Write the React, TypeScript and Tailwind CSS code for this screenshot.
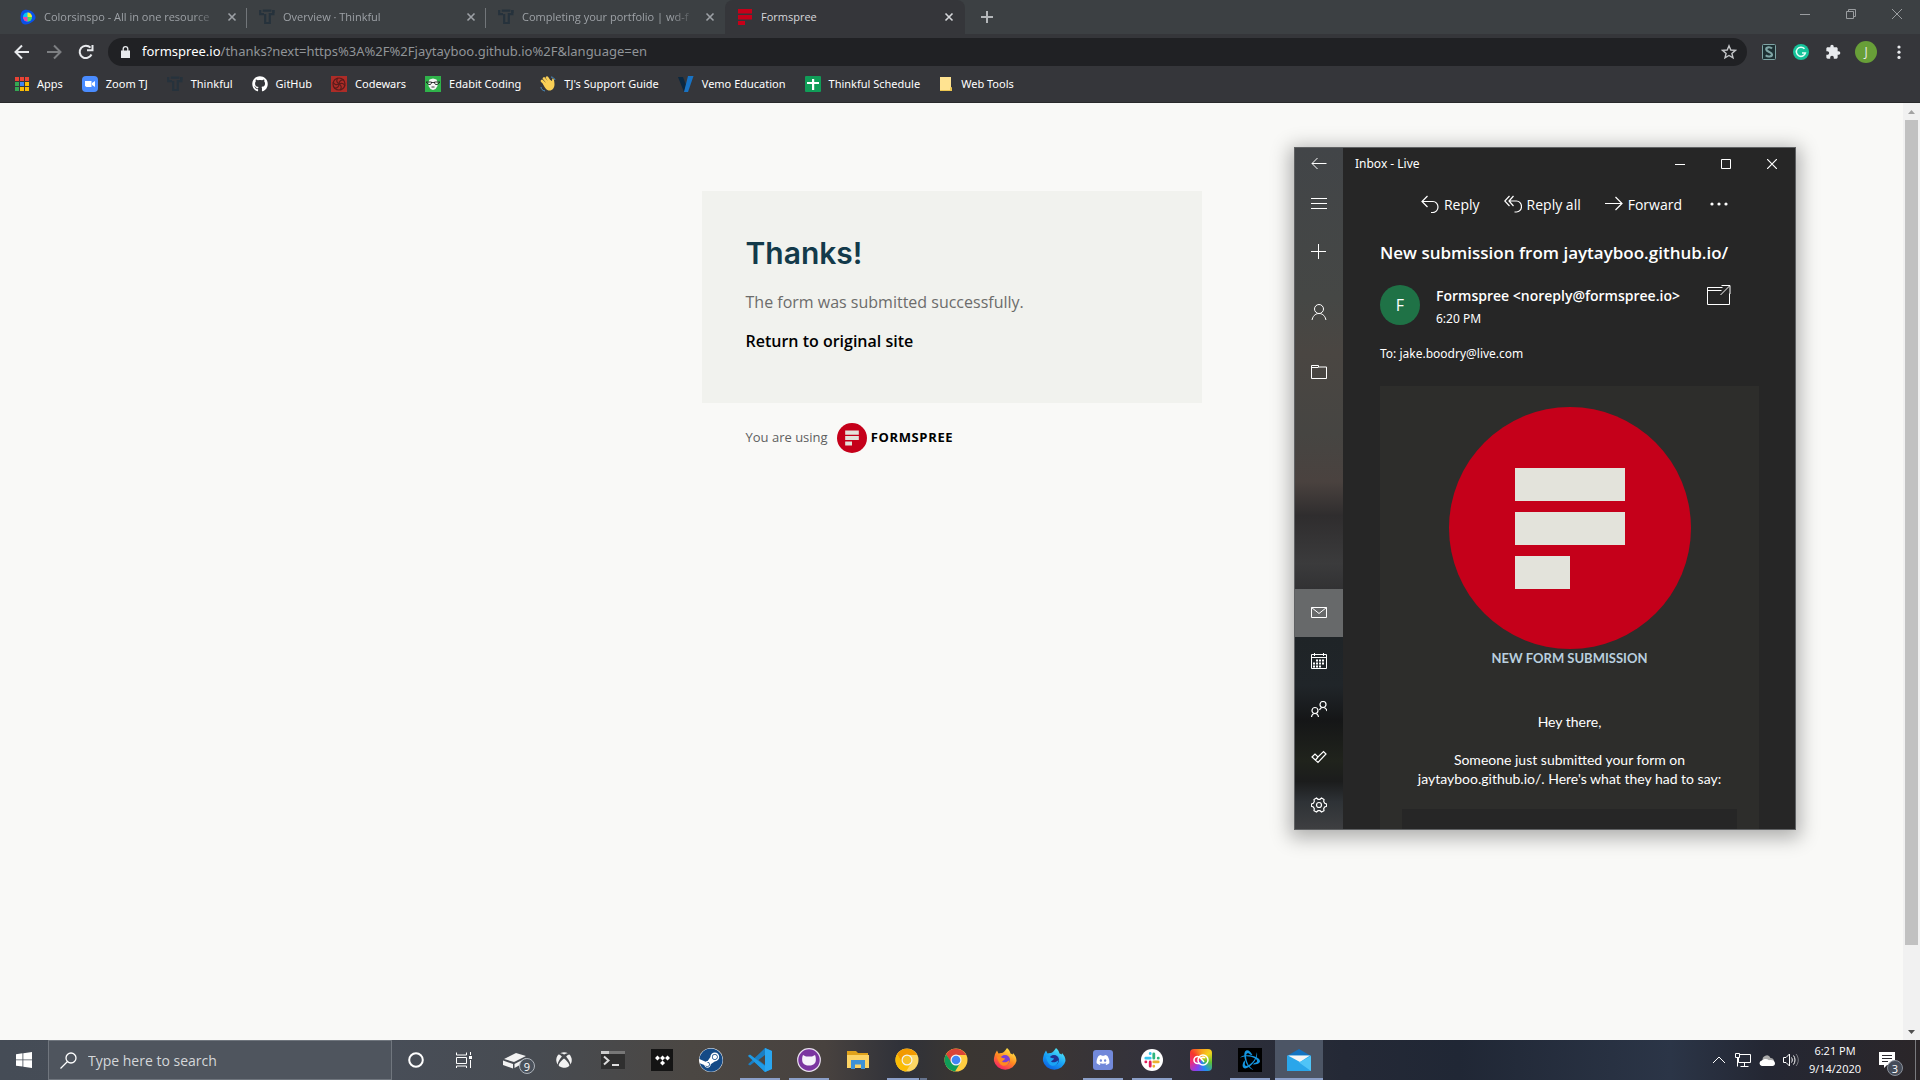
import React from "react";
import { FaGithub, FaXbox, FaSteam, FaDiscord } from "react-icons/fa";
import { MdExtension } from "react-icons/md";
import { SiCodewars, SiTidal, SiBattledotnet } from "react-icons/si";

type Kids = { children?: React.ReactNode };

function ThinkfulIcon() {
  return (
    <svg className="size-4 shrink-0" viewBox="0 0 16 16" fill="none" stroke="#26323c" strokeWidth="2.2" aria-hidden="true">
      <path d="M1.2 1v4.2H5M3.8 1.6h8.6M14.4 1v4.2h-3.6V14H6.2V5" />
      <path d="M14.4 1v3" />
    </svg>
  );
}

function ColorsinspoIcon() {
  return (
    <svg className="size-4 shrink-0" viewBox="0 0 16 16" aria-hidden="true">
      <path d="M2 2.5C4-.2 10 .5 13 3.5s3.500 6 .5 8.500S5 17 2.500 14.500 0 5 2 2.500z" fill="#0b50e8" />
      <circle cx="7.500" cy="8" r="4.500" fill="#0cc7f2" />
      <path d="M7.500 8V3.500A4.500 4.500 0 0 1 12 8z" fill="#f5e532" />
      <path d="M7.500 8H12a4.500 4.500 0 0 1-4.500 4.500z" fill="#45e05c" />
      <path d="M7.500 8v4.500A4.500 4.500 0 0 1 3 8z" fill="#ee3fa8" />
    </svg>
  );
}

function FormspreeBars() {
  return (
    <svg className="size-4 shrink-0" viewBox="0 0 16 16" fill="#c70019" aria-hidden="true">
      <path d="M1 0h14v4.500H1zM1 6h14v4.500H1zM1 12h7v4H1z" />
    </svg>
  );
}

function FormspreeLogo({ className }: { className: string }) {
  return (
    <svg className={className} viewBox="0 0 242 242" role="img" aria-label="Formspree">
      <circle cx="121" cy="121" r="121" fill="#c5001a" />
      <path d="M66 61h110v33H66zM66 105h110v33H66zM66 149h55v33H66z" fill="#e3e3db" />
    </svg>
  );
}

function Line({ children, w = 16, h = 16, sw = 1 }: Kids & { w?: number; h?: number; sw?: number }) {
  return (
    <svg width={w} height={h} viewBox={`0 0 ${w} ${h}`} fill="none" stroke="currentColor" strokeWidth={sw} className="shrink-0" aria-hidden="true">
      {children}
    </svg>
  );
}

function CloseX() {
  return (
    <Line w={10} h={10} sw={1.6}>
      <path d="M1.500 1.500l7 7M8.500 1.500l-7 7" />
    </Line>
  );
}

const tabs = [
  { title: "Colorsinspo - All in one resource", icon: <ColorsinspoIcon />, sep: true },
  { title: "Overview · Thinkful", icon: <ThinkfulIcon />, sep: true },
  { title: "Completing your portfolio | wd-f", icon: <ThinkfulIcon />, sep: false },
];

function TabStrip() {
  return (
    <div className="flex h-[34px] shrink-0 bg-[#3c4043] pl-2 text-[#9da1a6]">
      {tabs.map((t) => (
        <div key={t.title} className="relative flex w-[239px] items-center gap-2 pr-[10px] pl-3">
          {t.icon}
          <span className="min-w-0 flex-1 whitespace-nowrap [mask-image:linear-gradient(to_right,black_85%,transparent)]">{t.title}</span>
          <button aria-label={`Close ${t.title}`}><CloseX /></button>
          {t.sep && <span className="absolute top-2 right-0 h-5 w-px bg-[#72767a]" />}
        </div>
      ))}
      <div className="flex w-[240px] items-center gap-2 rounded-t-lg bg-[#35363a] pr-[11px] pl-3 text-[#d5d7da]">
        <FormspreeBars />
        <span className="flex-1">Formspree</span>
        <button aria-label="Close Formspree"><CloseX /></button>
      </div>
      <button aria-label="New tab" className="ml-4 text-[#b4b7ba]">
        <Line w={12} h={12} sw={2}><path d="M6 0v12M0 6h12" /></Line>
      </button>
      <div className="ml-auto flex h-7 text-[#9a9da0]">
        <button aria-label="Minimize" className="grid w-[46px] place-items-center"><Line w={10} h={10}><path d="M0 5.500h10" /></Line></button>
        <button aria-label="Restore" className="grid w-[46px] place-items-center"><Line w={10} h={10}><path d="M.5 2.500h7v7h-7zM2.500 2.500v-2h7v7h-2" /></Line></button>
        <button aria-label="Close window" className="grid w-[46px] place-items-center"><Line w={10} h={10}><path d="M0 0l10 10M10 0L0 10" /></Line></button>
      </div>
    </div>
  );
}

function Toolbar() {
  return (
    <div className="flex h-9 shrink-0 items-center bg-[#35363a] pr-[15px] pl-[14px] text-[#e8eaed]">
      <div className="flex w-[94px] shrink-0 gap-4">
        <button aria-label="Back"><Line sw={2}><path d="M15 8H2M8 1.500L1.500 8 8 14.500" /></Line></button>
        <button aria-label="Forward" className="text-[#7d7f82]"><Line sw={2}><path d="M1 8h13M8 1.500L14.500 8 8 14.500" /></Line></button>
        <button aria-label="Reload"><Line sw={2}><path d="M13.500 10.500A6.200 6.200 0 1 1 12.500 3.700M9 6.300h5.500V1" /></Line></button>
      </div>
      <div className="flex h-7 min-w-0 flex-1 items-center rounded-full bg-[#202124] pr-[10px] pl-[13px]">
        <svg className="mr-3 h-3 w-[9px] shrink-0" viewBox="0 0 9 12" aria-hidden="true">
          <path d="M0 4.500h9V12H0z" fill="#e8eaed" />
          <path d="M2.200 5V3a2.300 2.300 0 0 1 4.600 0v2" fill="none" stroke="#e8eaed" strokeWidth="1.300" />
        </svg>
        <span className="flex-1 truncate font-['Noto_Sans',sans-serif] text-[13px] text-[#909498]"><span className="text-white">formspree.io</span>/thanks?next=https%3A%2F%2Fjaytayboo.github.io%2F&amp;language=en</span>
        <button aria-label="Bookmark this page" className="text-[#c4c6c9]">
          <Line sw={1.4}><path d="M8 1.800l1.800 4.200 4.600.4-3.500 3 1.100 4.500L8 11.500l-4 2.400 1.100-4.500-3.500-3 4.600-.4z" /></Line>
        </button>
      </div>
      <div className="flex items-center gap-4 pl-3">
        <button aria-label="Stylus" className="ml-0.5">
          <svg className="size-4" viewBox="0 0 16 16" aria-hidden="true">
            <rect x="1.500" y=".5" width="13" height="15" rx="1" fill="#1d3033" stroke="#7fa5a5" />
            <path d="M11 4.500C9 2.500 5 3 5.300 5.500S11 8 11 10.500 6.500 13 4.800 11.300" fill="none" stroke="#7fa5a5" strokeWidth="2.200" />
          </svg>
        </button>
        <button aria-label="Grammarly">
          <svg className="size-4" viewBox="0 0 16 16" aria-hidden="true">
            <circle cx="8" cy="8" r="8" fill="#15c39a" />
            <path d="M11.500 4.800A4.600 4.600 0 1 0 12.400 9H9" fill="none" stroke="#e6fff8" strokeWidth="1.500" />
          </svg>
        </button>
        <button aria-label="Extensions"><MdExtension className="size-4" /></button>
        <button aria-label="Profile" className="-ml-0.5 grid size-[22px] place-items-center rounded-full bg-[#689f38] text-[12px]">J</button>
        <button aria-label="Menu">
          <svg className="h-4 w-3" viewBox="0 0 12 16" fill="currentColor" aria-hidden="true"><circle cx="6" cy="3" r="1.600" /><circle cx="6" cy="8.200" r="1.600" /><circle cx="6" cy="13.400" r="1.600" /></svg>
        </button>
      </div>
    </div>
  );
}

function AppsIcon() {
  const c = ["#ea4335", "#ea4335", "#ea4335", "#34a853", "#4285f4", "#fbbc05", "#34a853", "#fbbc05", "#fbbc05"];
  return (
    <svg className="size-[14px] shrink-0" viewBox="0 0 14 14" aria-hidden="true">
      {c.map((f, i) => <rect key={i} x={(i % 3) * 5} y={Math.floor(i / 3) * 5} width="4" height="4" fill={f} />)}
    </svg>
  );
}

const bookmarks = [
  { label: "Apps", icon: <AppsIcon /> },
  { label: "Zoom TJ", icon: <svg className="size-4 shrink-0" viewBox="0 0 16 16"><rect width="16" height="16" rx="4" fill="#4a8cff" /><path d="M3 5h6.500v6H4.500L3 10zM10 7l3-2v6l-3-2z" fill="#fff" /></svg> },
  { label: "Thinkful", icon: <ThinkfulIcon /> },
  { label: "GitHub", icon: <FaGithub className="size-4 shrink-0" /> },
  { label: "Codewars", icon: <span className="grid size-4 shrink-0 place-items-center bg-[#ad2c27]"><svg className="size-[14px]" viewBox="0 0 14 14" fill="none" stroke="#5a1c1b" strokeWidth="1.200"><circle cx="7" cy="7" r="6" /><path d="M7 7c0-3 2-4.500 5-4M7 7c2.600-1.500 5-.5 6 2M7 7c2.600 1.500 3 4 1 6M7 7c0 3-2 4.500-5 4M7 7C4.400 8.500 2 7.500 1 5M7 7C4.400 5.500 4 3 6 1" /></svg></span> },
  { label: "Edabit Coding", icon: <svg className="size-4 shrink-0" viewBox="0 0 16 16"><path d="M0 0h16v16H0z" fill="#2fb34a" /><path d="M3.500 6l1-2.500L8 2.500l3.500 1 1 2.500v4l-2 3L8 14l-2.500-1-2-3z" fill="#f4f4f4" /><path d="M1 6h5.500v1L5.500 8.500h-2zM9.500 6H15l-2.500 2.500h-2L9.500 7zM6 6.500h4M6.500 11h3" fill="none" stroke="#222" strokeWidth=".9" /></svg> },
  { label: "TJ's Support Guide", icon: <svg className="size-4 shrink-0" viewBox="0 0 16 16"><path d="M2 5l5 5M4 2.500l5 6M7 1.500l4 6" stroke="#f9cf55" strokeWidth="2.600" strokeLinecap="round" /><path d="M3 8l7-4 2 1 .3-2.500c1.500-.5 2 1.500 2.200 5.500 0 4-2 6.500-5 6.500S5 12 3 8z" fill="#f9cf55" /><path d="M11 1c2 0 3.500 1.500 4 3M1 11c0 2 1.500 3.500 4 4" fill="none" stroke="#4a8fc5" /></svg> },
  { label: "Vemo Education", icon: <svg className="size-4 shrink-0" viewBox="0 0 16 16"><path d="M0 1h5l3 8-2 7z" fill="#0b2840" /><path d="M10 0h5.500L10 16H6z" fill="#1873c4" /></svg> },
  { label: "Thinkful Schedule", icon: <svg className="size-4 shrink-0" viewBox="0 0 16 16"><rect width="16" height="16" rx="1" fill="#109d58" /><path d="M7 3h2.200v3H14v2H9.200v6H7V8H2V6h5z" fill="#fff" /></svg> },
  { label: "Web Tools", icon: <svg className="h-4 w-[14px] shrink-0" viewBox="0 0 14 16"><path d="M1 1h11v10l1 1v3H1z" fill="#ffe391" /><path d="M1 14h12v1H1zM11 11.500h2V14h-2z" fill="#edc64f" /></svg> },
];

function Bookmarks() {
  return (
    <nav aria-label="Bookmarks" className="flex h-[33px] shrink-0 items-center gap-[19px] border-b border-[#28292b] bg-[#35363a] pb-1 pl-[15px] font-['Noto_Sans',sans-serif] text-white">
      {bookmarks.map((b) => (
        <a key={b.label} href="#" className="flex h-full items-center gap-2 whitespace-nowrap">
          {b.icon}
          {b.label}
        </a>
      ))}
    </nav>
  );
}

function MailSide({ label, children, active = false }: Kids & { label: string; active?: boolean }) {
  return (
    <button aria-label={label} className={active ? "grid h-12 w-full place-items-center bg-[#67696a]" : "grid h-12 w-full place-items-center"}>
      {children}
    </button>
  );
}

function MailSidebar() {
  return (
    <div className="flex w-12 shrink-0 flex-col bg-[linear-gradient(to_bottom,#424548_0%,#454745_22%,#4a4642_30%,#464542_42%,#4a423f_49%,#2f2d2e_54%,#3b3b3c_61%,#2c2c2e_67%,#1f2427_72%,#202529_79%,#151617_84%,#20231c_90%,#1b1c1c_93%,#2e3236_96%,#3e3f41_100%)]">
      <button aria-label="Back" className="grid h-8 place-items-center"><Line><path d="M15.500 7.500H1M6.500 2L1 7.500 6.500 13" /></Line></button>
      <MailSide label="Expand"><Line><path d="M0 2.500h16M0 7.500h16M0 12.500h16" /></Line></MailSide>
      <MailSide label="New mail"><Line><path d="M7.500 0v15M0 7.500h15" /></Line></MailSide>
      <div className="mt-3">
        <MailSide label="Accounts"><Line><circle cx="8" cy="5" r="4.500" /><path d="M1 16.500c.5-4 3-7 7-7s6.500 3 7 7" /></Line></MailSide>
      </div>
      <div className="mt-3">
        <MailSide label="Folders"><Line><path d="M.5 1.500h7v1.500h8v11.500H.5zM.5 3.500h7" /></Line></MailSide>
      </div>
      <div className="mt-auto">
        <MailSide label="Mail" active><Line><path d="M.5 2.500h15v10H.5zM.5 2.500L8 8.500l7.500-6" /></Line></MailSide>
        <MailSide label="Calendar"><Line><path d="M.5 1.500h15v14H.5zM.5 4.500h15M3.500 0v3M12.500 0v3" /><path d="M5 7.500h8M2 10.500h11M2 13.500h8" strokeWidth="2" strokeDasharray="2 1" /></Line></MailSide>
        <MailSide label="People"><Line sw={1.2}><circle cx="12" cy="3.500" r="3" /><circle cx="4" cy="9.500" r="3" /><path d="M8.500 9c.5-1.500 1.500-2.500 3.500-2.500s3.500 1.500 4 3.500M.5 16c.3-2 1.500-3.500 3.500-3.500s3.200 1.500 3.500 3.500" /></Line></MailSide>
        <MailSide label="To Do"><Line sw={1.2}><path d="M1 8l3-3 3 3 5.500-5.500 2.500 2.500-8 8.500zM4.500 11L7 8" /></Line></MailSide>
        <MailSide label="Settings">
          <Line sw={1.2}>
            <circle cx="8" cy="8" r="2.500" />
            <path d="M5.500 1L7 2.300h2L10.500 1l2.500 1.500-.3 2 1 1.700 1.900.7v2.400l-1.900.7-1 1.700.3 2L10.500 15 9 13.700H7L5.500 15 3 13.700l.3-2-1-1.700-1.900-.7V6.900l1.900-.7 1-1.700-.3-2z" />
          </Line>
        </MailSide>
      </div>
    </div>
  );
}

function MailWindow() {
  return (
    <section aria-label="Inbox - Live" className="absolute top-11 right-[124px] flex h-[683px] w-[502px] border border-[#5f6163] bg-[#262626] text-white shadow-[0_4px_18px_4px_rgba(0,0,0,0.3)]">
      <MailSidebar />
      <div className="flex min-w-0 flex-1 flex-col">
        <div className="flex h-8 shrink-0 items-center pl-3">
          <span className="flex-1 font-['Noto_Sans',sans-serif] text-[12px]">Inbox - Live</span>
          <button aria-label="Minimize mail" className="grid h-8 w-[46px] place-items-center"><Line w={10} h={10}><path d="M0 5.500h10" /></Line></button>
          <button aria-label="Maximize mail" className="grid h-8 w-[46px] place-items-center"><Line w={10} h={10}><path d="M.5.500h9v9h-9z" /></Line></button>
          <button aria-label="Close mail" className="grid h-8 w-[46px] place-items-center"><Line w={10} h={10} sw={1.2}><path d="M0 0l10 10M10 0L0 10" /></Line></button>
        </div>
        <div className="flex h-12 shrink-0 items-center justify-end gap-6 pr-[67px] text-[14px]">
          <button className="flex items-center gap-[5px]"><Line w={18} h={18} sw={1.2}><path d="M6.500 1L1 6.500 6.500 12M1 6.500h11a5 5.500 0 0 1 0 11h-2" /></Line>Reply</button>
          <button className="flex items-center gap-[5px]"><Line w={18} h={18} sw={1.2}><path d="M5.500 1L.8 6 5.500 11M9.500 1L5 6l4.500 5M5 6h7.500a5 5.500 0 0 1 0 11h-2" /></Line>Reply all</button>
          <button className="flex items-center gap-[5px]"><Line w={18} h={18} sw={1.2}><path d="M0 8.500h17M10.500 2l6.500 6.500-6.500 6.500" /></Line>Forward</button>
          <button aria-label="More actions" className="ml-1"><svg className="h-4 w-[18px]" viewBox="0 0 18 16" fill="currentColor"><circle cx="2" cy="8" r="1.600" /><circle cx="9" cy="8" r="1.600" /><circle cx="16" cy="8" r="1.600" /></svg></button>
        </div>
        <div className="flex min-h-0 flex-1 flex-col pr-9 pl-9">
          <h2 className="mt-[13px] ml-px text-[17px] leading-6 font-semibold whitespace-nowrap">New submission from jaytayboo.github.io/</h2>
          <div className="mt-5 ml-px flex items-start gap-4">
            <span className="grid size-10 shrink-0 place-items-center rounded-full bg-[#1f7246] text-[16px]">F</span>
            <div className="flex-1 whitespace-nowrap">
              <p className="text-[14px] leading-[22px] font-semibold">Formspree &lt;noreply@formspree.io&gt;</p>
              <p className="font-['Noto_Sans',sans-serif] text-[12px] leading-6">6:20 PM</p>
            </div>
            <button aria-label="Open in new window" className="mr-7"><Line w={24} h={21}><path d="M15.500 2.500H.5v17h22v-11M.5 5.500h14M14.500.500h8.500V9M22.500 1l-9 9" /></Line></button>
          </div>
          <p className="mt-[15px] ml-px font-['Noto_Sans',sans-serif] text-[12px] leading-4">To: jake.boodry@live.com</p>
          <div className="mt-6 ml-px flex min-h-0 flex-1 flex-col items-center overflow-hidden bg-[#2d2d2b] pt-[21px] font-[Lato,sans-serif] text-[14px] leading-[19px]">
            <FormspreeLogo className="size-[242px] shrink-0" />
            <p className="text-[13px] font-bold text-[#b9cfdf]">NEW FORM SUBMISSION</p>
            <p className="mt-11">Hey there,</p>
            <p className="mt-[19px] text-center">Someone just submitted your form on<br />jaytayboo.github.io/. Here's what they had to say:</p>
            <div className="mt-[21px] h-12 w-[335px] shrink-0 bg-[#262626]" />
          </div>
        </div>
      </div>
    </section>
  );
}

function PageView() {
  return (
    <div className="relative flex min-h-0 flex-1 bg-[#f9f9f7]">
      <main className="flex flex-1 flex-col items-center pt-[88px]">
        <div className="w-[500px] font-['Open_Sans',sans-serif]">
          <div className="bg-[#f1f2ee] px-11 pt-10 pb-[50px]">
            <h1 className="font-[Inter,sans-serif] text-[30px] leading-[44px] font-semibold text-[#133a4a]">Thanks!</h1>
            <p className="mt-[15px] text-[16px] leading-6 text-[#6c6c6b]">The form was submitted successfully.</p>
            <a href="#" className="mt-[15px] block text-[16px] leading-6 font-semibold text-black">Return to original site</a>
          </div>
          <div className="mt-5 flex items-center pl-11 text-[13px] text-[#5f5f5f]">
            You are using
            <FormspreeLogo className="mr-1 ml-[9px] size-[30px]" />
            <span className="font-bold tracking-wider text-black">FORMSPREE</span>
          </div>
        </div>
      </main>
      <div className="flex w-[17px] shrink-0 flex-col items-center bg-[#f1f1f1]">
        <button aria-label="Scroll up" className="grid h-[17px] place-items-center"><svg className="h-1 w-[7px]" viewBox="0 0 7 4"><path d="M0 4l3.500-4L7 4z" fill="#a3a3a3" /></svg></button>
        <div className="w-[13px] flex-[825] bg-[#c1c1c1]" />
        <div className="flex-[78]" />
        <button aria-label="Scroll down" className="grid h-[17px] place-items-center"><svg className="h-1 w-[7px]" viewBox="0 0 7 4"><path d="M0 0l3.500 4L7 0z" fill="#505050" /></svg></button>
      </div>
      <MailWindow />
    </div>
  );
}

function ChromeLogo({ canary = false }: { canary?: boolean }) {
  const [a, b, c, d] = canary ? ["#f29900", "#fdd663", "#fbbc04", "#f6bf26"] : ["#db4437", "#ffcd40", "#0f9d58", "#4285f4"];
  return (
    <svg className="size-6" viewBox="0 0 24 24" aria-hidden="true">
      <circle cx="12" cy="12" r="11.500" fill={b} />
      <path d="M2 6.300A11.500 11.500 0 0 1 22.200 7H12L7 15z" fill={a} />
      <path d="M2 6.300A11.500 11.500 0 0 0 11 23.500L16.500 14.500 7.500 14.500z" fill={c} />
      <circle cx="12" cy="12" r="5.500" fill="#f3f3f3" />
      <circle cx="12" cy="12" r="4.300" fill={d} />
    </svg>
  );
}

function FoxLogo({ id, c1, c2, c3, core }: { id: string; c1: string; c2: string; c3: string; core: string }) {
  return (
    <svg className="size-6" viewBox="0 0 24 24" aria-hidden="true">
      <defs><linearGradient id={id} x1="0.800" y1="0" x2="0.200" y2="1"><stop offset="0" stopColor={c1} /><stop offset=".5" stopColor={c2} /><stop offset="1" stopColor={c3} /></linearGradient></defs>
      <path d="M1.500 8C2 5.500 3 4 4 2.500l1.500 3C6.500 5 8 4.700 9 5c1.500-.5 3-2 5-5 2 1.500 3 3.500 3.500 5.500 1 .3 1.800.7 2.300 1L20 5c2.500 2.500 3.500 5 3.500 8A11.500 11 0 0 1 1 13c-.2-2 0-3.500.5-5z" fill={`url(#${id})`} />
      <circle cx="12" cy="12" r="5" fill={core} />
      <path d="M4 9c2-1 3.500 0 5 .7 1 .5 3 .3 3 1-.5 1.300-2 1.500-3 2.800 2 1.500 5 1 7.500-1.500-.5 4-3 6-6 5.700S5 14 4 9z" fill={c2} />
    </svg>
  );
}

const taskApps: { name: string; icon: React.ReactNode; open?: boolean; active?: boolean; multi?: boolean }[] = [
  { name: "Card file", icon: (
    <span className="relative">
      <svg className="h-5 w-6" viewBox="0 0 24 20" aria-hidden="true"><path d="M1 9L13 3l10 3-12 6zM0 10.500l10 3.500v4.500L0 15zM11.500 14L23 8v3.500L11.500 18z" fill="#f2f2f2" /></svg>
      <span className="absolute top-2 left-4 grid size-4 place-items-center rounded-full border border-[#aeb4bb] bg-[#4a515b] text-[11px] text-white">9</span>
    </span>) },
  { name: "Xbox", icon: <FaXbox className="size-4 text-[#f2f2f2]" /> },
  { name: "Terminal", icon: <svg className="h-5 w-6" viewBox="0 0 24 20"><path d="M0 1h24v18H0z" fill="#2f2f2f" /><path d="M0 1h8v3H0z" fill="#ccc" /><path d="M8 1h16v3H8z" fill="#777" /><path d="M3 6.500l4.500 4L3 14.500" fill="none" stroke="#ddd" strokeWidth="2" /><path d="M11 14h7v2h-7z" fill="#ddd" /></svg> },
  { name: "Tidal", icon: <span className="grid size-[22px] place-items-center bg-[#141414]"><SiTidal className="size-[15px] text-white" /></span> },
  { name: "Steam", icon: <span className="grid size-6 place-items-center rounded-full bg-white"><FaSteam className="size-6 text-[#144a86]" /></span> },
  { name: "Visual Studio Code", open: true, icon: <svg className="size-6" viewBox="0 0 24 24"><path d="M17 0l7 3v18l-7 3L6.500 14 2 17.500 0 16.300 14 3z" fill="#1a7fc4" /><path d="M0 7.700L2 6.500 17 18V24L0 8z" fill="#1f9be6" /><path d="M17 0l7 3v18l-7 3z" fill="#2aa6f0" /><path d="M17 7v10l-6.500-5z" fill="#4b4642" /></svg> },
  { name: "GitHub Desktop", open: true, icon: <svg className="size-6" viewBox="0 0 24 24"><circle cx="12" cy="12" r="11.300" fill="#7b35a0" stroke="#e8e0ee" strokeWidth="1.200" /><path d="M6 7l3 1.500h6L18 7c.7 2 1 3 .8 5.500C18.500 16 16 17.500 12 17.500S5.500 16 5.200 12.500C5 10 5.300 9 6 7z" fill="#f6f2fa" /></svg> },
  { name: "File Explorer", icon: <svg className="h-5 w-6" viewBox="0 0 24 20"><path d="M1 1h9l2 2h10v4H1z" fill="#e0a21b" /><path d="M1 5h22v13H1z" fill="#fcd365" /><path d="M5 10h14v9h-4v-4.500H9V19H5z" fill="#3e91d6" /></svg> },
  { name: "Chrome Canary", open: true, multi: true, icon: <ChromeLogo canary /> },
  { name: "Chrome", icon: <ChromeLogo /> },
  { name: "Firefox", icon: <FoxLogo id="fx" c1="#fff44f" c2="#ff8a1f" c3="#f5156c" core="#7a3fd6" /> },
  { name: "Firefox Developer Edition", icon: <FoxLogo id="fxdev" c1="#5cf0f5" c2="#1aa5f5" c3="#0a5be0" core="#20318f" /> },
  { name: "Discord", open: true, icon: <span className="grid h-5 w-5 place-items-center rounded-[3px] bg-[#7289da]"><FaDiscord className="size-[14px] text-white" /></span> },
  { name: "Slack", open: true, icon: <svg className="size-[22px]" viewBox="0 0 22 22"><circle cx="11" cy="11" r="11" fill="#fff" /><g fill="none" strokeWidth="2.800" strokeLinecap="round"><path d="M9.200 4.500v.2M4.800 9.200h4.400" stroke="#36c5f0" /><path d="M12.800 4.800v4.400M17.200 9.200h.1" stroke="#2eb67d" /><path d="M12.800 12.900h4.400M12.800 17.200v.1" stroke="#ecb22e" /><path d="M9.200 12.900v4.300M4.800 12.900h.1" stroke="#e01e5a" /></g></svg> },
  { name: "Creative Cloud", icon: <span className="grid size-[22px] place-items-center rounded bg-[conic-gradient(from_0deg,#f79b1d,#f5d21c,#5ec232,#1f8ff0,#8a3ff0,#ee2b7b,#f7372b,#f79b1d)]"><svg className="h-3 w-4" viewBox="0 0 16 12" fill="none" stroke="#fff" strokeWidth="1.500"><circle cx="10" cy="6" r="5" /><path d="M7 9.500H4.500a3.500 3.500 0 0 1 0-7c2 0 3 1.500 6.500 5.500M12 4a2.500 2.500 0 0 0-4 .5" /></svg></span> },
  { name: "Battle.net", open: true, icon: <span className="grid size-6 place-items-center bg-black"><SiBattledotnet className="size-5 text-[#1596e0]" /></span> },
  { name: "Mail", active: true, icon: <svg className="size-6" viewBox="0 0 24 24"><path d="M0 8l12-7 12 7z" fill="#1272c0" /><path d="M0 7.500h24V23H0z" fill="#2aa6ea" /><path d="M1 7.500h22L13 14z" fill="#f4f4f4" /><path d="M24 8v15L12 14.500z" fill="#4fc4f7" /></svg> },
];

function Taskbar() {
  return (
    <footer className="flex h-10 shrink-0 bg-[linear-gradient(to_right,#454c56_0%,#484e58_20%,#474b51_28%,#4b4743_36%,#48423f_43%,#2f3139_47%,#3a3632_50%,#3a3535_55%,#33323c_60%,#242936_70%,#202735_76%,#2b3547_87%,#242733_92%,#2b2629_100%)] text-white">
      <button aria-label="Start" className="grid w-12 place-items-center">
        <svg className="size-4" viewBox="0 0 16 16" fill="#fff"><path d="M0 2.200l6.500-.9v6.200H0zM7.300 1.200L16 0v7.500H7.300zM0 8.300h6.500v6.200L0 13.700zM7.300 8.300H16V16l-8.700-1.200z" /></svg>
      </button>
      <label className="flex w-[344px] items-center border border-[#70767e] bg-[#4f555e] pl-[11px]">
        <Line w={17} h={17} sw={1.3}><circle cx="11" cy="6" r="5" /><path d="M7.500 9.500L.5 16.500" /></Line>
        <input aria-label="Search" placeholder="Type here to search" className="ml-[11px] w-full bg-transparent text-[14px] outline-none placeholder:text-[#d5d7da]" />
      </label>
      <button aria-label="Cortana" className="grid w-12 place-items-center"><Line w={16} h={16} sw={2}><circle cx="8" cy="8" r="6.800" /></Line></button>
      <button aria-label="Task View" className="grid w-12 place-items-center"><Line><path d="M.5.500v2.500h10V.500M.5 5.500h10v6H.5zM.5 16v-2h10v2M14.500 0v3M14.500 8v8" /><path d="M13 4h3v3h-3z" fill="currentColor" stroke="none" /></Line></button>
      <div className="ml-[3px] flex gap-px">
        {taskApps.map((a) => (
          <button key={a.name} aria-label={a.name} className={a.active ? "relative grid w-12 place-items-center bg-[#4c5565]" : "relative grid w-12 place-items-center"}>
            {a.icon}
            {a.open && <span className="absolute bottom-0 left-1 h-0.5 w-10 bg-[#8b9fc8]" />}
            {a.multi && <span className="absolute right-1 bottom-0 h-0.5 w-2 border-l border-[#33353c] bg-[#66748f]" />}
            {a.active && <span className="absolute bottom-0 left-0 h-0.5 w-12 bg-[#8b9fc8]" />}
          </button>
        ))}
      </div>
      <div className="ml-auto flex items-center">
        <div className="flex items-center gap-2">
          <button aria-label="Show hidden icons"><Line><path d="M2 11l6-6 6 6" /></Line></button>
          <button aria-label="Network"><Line><path d="M5 2.500h10.500v8H3.500V6M.5 1.500h4v4h-4zM2.500 5.500v9M9.500 10.500v4M5.500 14.500h8" /></Line></button>
          <button aria-label="OneDrive"><svg className="size-4" viewBox="0 0 16 16"><path d="M4 9a4 4 0 0 1 7.500-3A3.500 3.500 0 0 1 15 9z" fill="#aaa" /><path d="M2.800 14a2.800 2.800 0 0 1 0-5.500C5 6.500 8 6.500 10 8.300c3-.8 6 .5 6 3 0 1.700-1 2.700-2.500 2.700z" fill="#fff" /></svg></button>
          <button aria-label="Volume"><Line><path d="M.5 5.500H3L6.500 2v12L3 10.500H.5zM8.500 5.500c1 1.500 1 3.500 0 5M10.500 3.500c2 2.500 2 6.500 0 9" /><path d="M13 2c3 3.500 3 8.500 0 12" opacity=".4" /></Line></button>
        </div>
        <div className="w-[72px] text-center text-[11px] leading-[18px]">6:21 PM<br />9/14/2020</div>
        <button aria-label="Notifications" className="relative ml-2 grid w-9 place-items-start">
          <svg className="h-4 w-4" viewBox="0 0 16 16"><path d="M0 0h16v13h-8l-3 3v-3H0z" fill="#fff" /><path d="M3 3.500h10M3 6.500h10M3 9.500h6" stroke="#2b2a30" /></svg>
          <span className="absolute top-2 left-2 grid size-4 place-items-center rounded-full border border-[#8a909a] bg-[#454c59] text-[11px]">3</span>
        </button>
        <span className="h-10 w-[5px] border-l border-[#7a7a7e]" />
      </div>
    </footer>
  );
}

export default function App() {
  return (
    <div className="flex h-screen flex-col overflow-hidden font-['Open_Sans','Noto_Sans',sans-serif] text-[11px]">
      <TabStrip />
      <Toolbar />
      <Bookmarks />
      <PageView />
      <Taskbar />
    </div>
  );
}
